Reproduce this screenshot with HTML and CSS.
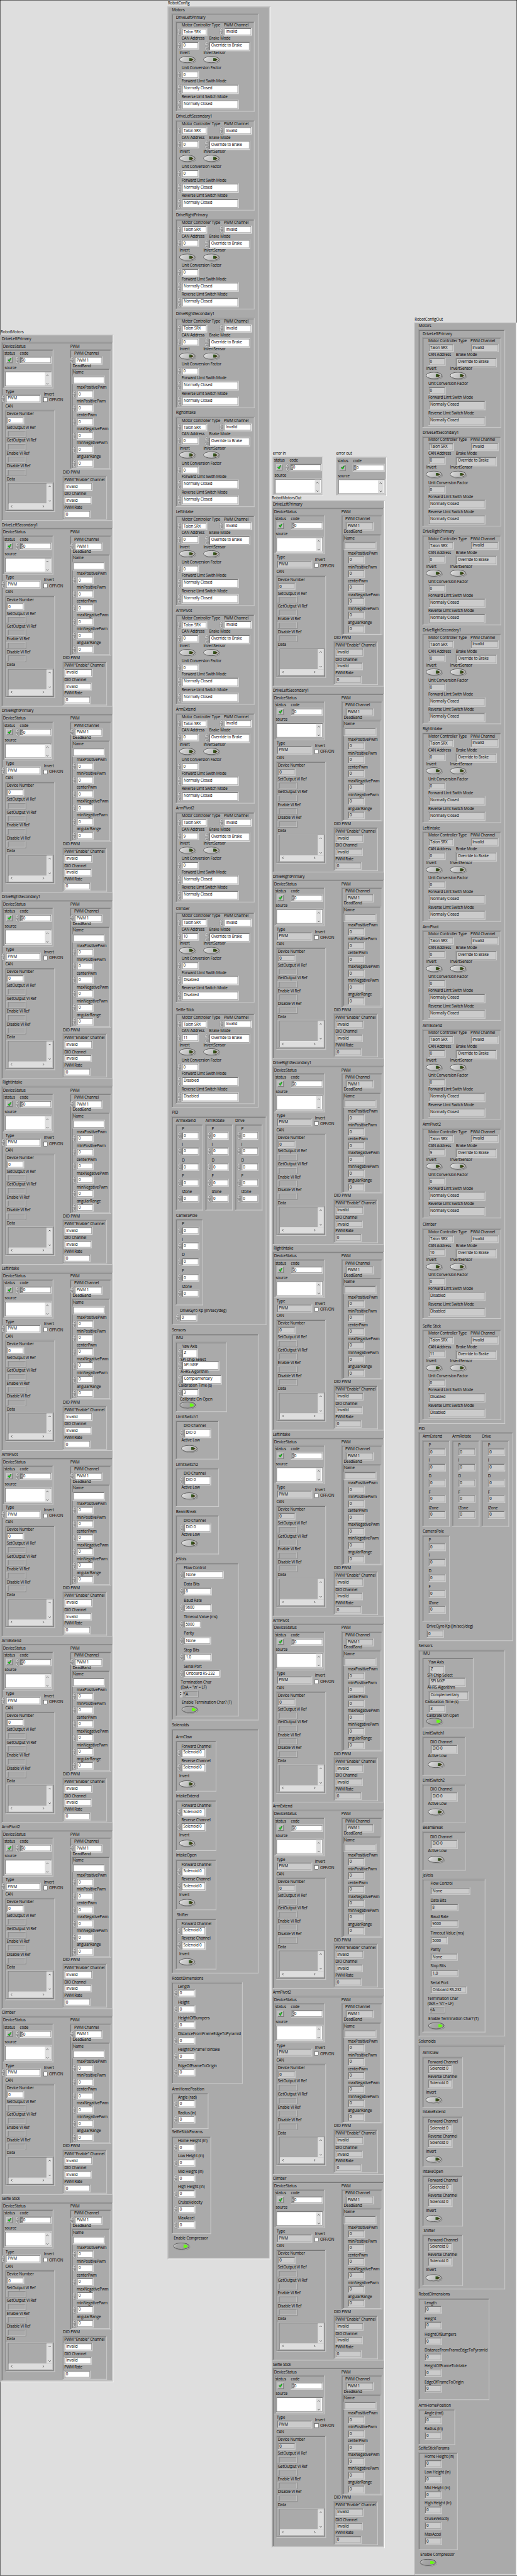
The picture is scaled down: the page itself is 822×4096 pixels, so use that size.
FILE: index.html
```html
<!DOCTYPE html>
<html lang="en">
<head>
<meta charset="utf-8">
<title>Robot Config Front Panel</title>
<link rel="stylesheet" href="styles.css">
</head>
<body>
<svg class="defs" width="0" height="0">
  <defs>
    <linearGradient id="metal" x1="0" y1="0" x2="1" y2="0.35">
      <stop offset="0" stop-color="#f4f4f4"/><stop offset="0.35" stop-color="#cfcfcf"/><stop offset="1" stop-color="#b4b4b4"/>
    </linearGradient>
    <linearGradient id="metalOn" x1="0" y1="0" x2="1" y2="0.35">
      <stop offset="0" stop-color="#e8e8e8"/><stop offset="0.3" stop-color="#a8a8a8"/><stop offset="1" stop-color="#9a9a9a"/>
    </linearGradient>
    <linearGradient id="dome" x1="0" y1="0" x2="1" y2="0">
      <stop offset="0" stop-color="#dcdcdc"/><stop offset="1" stop-color="#a6a6a6"/>
    </linearGradient>
    <linearGradient id="ledOff" x1="0" y1="0" x2="1" y2="0.4">
      <stop offset="0" stop-color="#336b2c"/><stop offset="1" stop-color="#3b2c06"/>
    </linearGradient>
  </defs>
  <symbol id="toggle-off" viewBox="0 0 52 24">
    <ellipse cx="27.5" cy="13.6" rx="24.3" ry="10" fill="#8a8a8a"/>
    <ellipse cx="26" cy="12.3" rx="24.3" ry="10" fill="#b8b8b8"/>
    <ellipse cx="24.8" cy="10.7" rx="23.8" ry="9.7" fill="url(#metal)" stroke="#3c3c3c" stroke-width="1.4"/>
    <path d="M30.5 6.3h6l7 4.6-6 4.4h-7z" fill="url(#ledOff)"/>
  </symbol>
  <symbol id="toggle-on" viewBox="0 0 52 24">
    <ellipse cx="27.5" cy="13.6" rx="24.3" ry="10" fill="#8a8a8a"/>
    <ellipse cx="26" cy="12.3" rx="24.3" ry="10" fill="#b8b8b8"/>
    <ellipse cx="24.8" cy="10.7" rx="23.8" ry="9.7" fill="url(#metalOn)" stroke="#3c3c3c" stroke-width="1.4"/>
    <path d="M31.5 6h6l7.5 5-6 4.6h-7.5z" fill="#66fb12"/>
  </symbol>
  <symbol id="spin-24" viewBox="0 0 12 24">
    <path d="M.7 11.4C.7 5 2.500 .8 6 .8s5.300 4.200 5.300 10.600z" fill="url(#dome)" stroke="#6e6e6e" stroke-dasharray="1.600 .9" stroke-width=".9"/>
    <path d="M.7 12.800C.7 19 2.500 23.200 6 23.200s5.300-4.200 5.300-10.400z" fill="url(#dome)" stroke="#5c5c5c" stroke-dasharray="1.600 .9" stroke-width=".9"/>
    <path d="M4 8.500L6.200 5l2 3.500M4 15.300h4.200L6.200 18.800z" fill="none" stroke="#555" stroke-width="1"/>
  </symbol>
  <symbol id="spin-31" viewBox="0 0 12 31">
    <path d="M.7 12.800C.7 5 2.500 .8 6 .8s5.300 4.200 5.300 12z" fill="url(#dome)" stroke="#6e6e6e" stroke-dasharray="1.600 .9" stroke-width=".9"/>
    <path d="M.7 18C.7 26 2.500 30.200 6 30.200s5.300-4.200 5.300-12.200z" fill="url(#dome)" stroke="#5c5c5c" stroke-dasharray="1.600 .9" stroke-width=".9"/>
    <path d="M4 9L6.200 5.500l2 3.500M4 22h4.200L6.200 25.500z" fill="none" stroke="#555" stroke-width="1"/>
  </symbol>
  <symbol id="check" viewBox="0 0 12 12">
    <path d="M1 6.500l3-.8 1.200 1.500L8.300 1.500l3-.8L6.500 11H4.200z" fill="#12f312" stroke="#0a2a0a" stroke-width=".9"/>
  </symbol>
  <symbol id="chev-up" viewBox="0 0 8 6"><path d="M.8 5L4 1.800 7.200 5" fill="none" stroke="#5a5a5a" stroke-width="1.900"/></symbol>
  <symbol id="chev-down" viewBox="0 0 8 6"><path d="M.8 1L4 4.200 7.200 1" fill="none" stroke="#5a5a5a" stroke-width="1.900"/></symbol>
  <symbol id="chev-left" viewBox="0 0 6 8"><path d="M5 .8L1.800 4 5 7.200" fill="none" stroke="#5a5a5a" stroke-width="1.900"/></symbol>
  <symbol id="chev-right" viewBox="0 0 6 8"><path d="M1 .8L4.200 4 1 7.200" fill="none" stroke="#5a5a5a" stroke-width="1.900"/></symbol>
</svg>
<main class="window"><div class="panel" id="panel"></div></main>
<script src="panel.js"></script>
</body>
</html>
```
FILE: styles.css
```css
* { box-sizing: border-box; }

body {
  margin: 0;
  background: #dedede;
}

.defs { display: block; }

.window {
  width: 822px;
  height: 4096px;
  overflow: hidden;
}

/* The panel is laid out at design size and scaled down to the window. */
.panel {
  display: grid;
  grid-template-columns: 508px 315px 434px 311px;
  width: 1570px;
  height: 7819px;
  border: 1px solid #000;
  background: #dedede;
  transform: scale(0.52357, 0.52385);
  transform-origin: 0 0;
  font: 12px/16px "Open Sans", "Noto Sans", sans-serif;
  letter-spacing: -0.32px;
  color: #000;
  white-space: nowrap;
}

.column { min-width: 0; }
.column-motors { padding-top: 997.6px; }
.column-config { padding-top: 0; }
.column-motors-out { padding-top: 1368px; }
.column-config-out { padding-top: 959.6px; }

.row {
  display: flex;
  align-items: flex-start;
}

.cell {
  flex: none;
  width: 0;
}

.control {
  display: flex;
  flex-direction: column;
  align-items: flex-start;
  width: max-content;
}

.label {
  position: relative;
  z-index: 1;
  height: 16px;
}

.cluster {
  border: 2px solid;
  border-color: #999 #cbcbcb #cbcbcb #999;
  box-shadow: inset 2px 2px 0 #777;
  background: #aaa;
}

.cluster.top {
  border-color: #c9c9c9 #fff #fff #c9c9c9;
  box-shadow: inset -2px -2px 0 #cbcbcb;
}

.input {
  display: flex;
  align-items: center;
}

.spinner {
  flex: none;
  width: 12px;
  margin-left: -12px;
}

.field {
  align-self: flex-start;
  padding: 2px 0 0 5px;
  border: 2px solid;
  border-color: #999 #cbcbcb #cbcbcb #999;
  box-shadow: inset 2px 2px 0 #777, inset -2px -2px 0 #aaa;
  background: #fff;
  line-height: 16px;
}

.field.indicator { background: #cbcbcb; }

.field.numeric { padding-left: 4px; }

.code {
  display: flex;
  padding: 2px 2px 2px 2px;
}

.code .radix {
  width: 7px;
  padding-left: 1px;
  background: #777;
  color: #e8e8e8;
}

.source {
  display: flex;
  justify-content: flex-end;
  width: 145px;
  height: 48px;
  padding: 2px 4px 2px 2px;
}

.scroll {
  display: flex;
  justify-content: space-between;
  background: #dedede;
}

.scroll.vertical {
  flex-direction: column;
  align-items: center;
  width: 16px;
  padding: 6px 0 2px;
}

.scroll.vertical svg { width: 8px; height: 6px; }
.scroll.horizontal svg { width: 6px; height: 8px; }

.status {
  display: flex;
  align-items: center;
  justify-content: center;
  width: 19px;
  height: 19px;
  border: 2px solid;
  border-color: #cbcbcb #777 #777 #cbcbcb;
  background: #bbb;
}

.status svg { width: 12px; height: 12px; }

.toggle {
  display: block;
  width: 52px;
  height: 24px;
}

.check {
  display: flex;
  align-items: center;
  gap: 4px;
}

.check i {
  width: 13px;
  height: 13px;
  border: 1px solid #222;
  background: #fff;
}

.ref {
  border: 1px solid;
  border-color: #cbcbcb #777 #777 #cbcbcb;
  width: 60px;
  height: 21px;
  padding: 1px 1px 1px 5px;
}

.ref .well {
  height: 100%;
  border: 1px solid;
  border-color: #777 #cbcbcb #cbcbcb #777;
}

.ref.data {
  width: 144px;
  height: 86px;
  border-width: 1px 2px 2px 1px;
}

.ref.data .well {
  display: grid;
  grid-template: 1fr 17px / 1fr 17px;
}

.ref.data .view { border: 1px solid; border-color: transparent #fff #fff transparent; }
.ref.data .vertical { width: 17px; padding: 6px 0 5px; }
.ref.data .horizontal { grid-column: 1 / 3; align-items: center; padding: 0 24px 2px 6px; }

.char {
  display: flex;
  align-items: stretch;
}

.char .steps {
  display: flex;
  flex-direction: column;
  align-items: center;
  gap: 3px;
  width: 7px;
  margin: 0 1px 0 -8px;
  padding: 4px 0;
  background: #cbcbcb;
}

.char .steps i {
  border: 2.500px solid transparent;
  border-top: 0;
  border-bottom: 4px solid #000;
}

.char .steps i:last-child {
  border-bottom: 0;
  border-top: 4px solid #000;
}

.char .box {
  display: flex;
  width: 49px;
  height: 21px;
  padding: 1px 1px 1px 1px;
  border: 1px solid;
  border-color: #cbcbcb #777 #777 #cbcbcb;
  line-height: 15px;
}

.char .box b { width: 6px; font-weight: 400; }

.char .box span {
  flex: 1;
  padding-left: 1px;
  border: 1px solid;
  border-color: #777 #cbcbcb #cbcbcb #777;
}
```
FILE: panel.js
```js
const MOTORS = [
  ["DriveLeftPrimary", "0", "Normally Closed"],
  ["DriveLeftSecondary1", "0", "Normally Closed"],
  ["DriveRightPrimary", "0", "Normally Closed"],
  ["DriveRightSecondary1", "0", "Normally Closed"],
  ["RightIntake", "0", "Normally Closed"],
  ["LeftIntake", "0", "Normally Closed"],
  ["ArmPivot", "0", "Normally Closed"],
  ["ArmExtend", "0", "Normally Closed"],
  ["ArmPivot2", "9", "Normally Closed"],
  ["Climber", "10", "Disabled"],
  ["Selfie Stick", "11", "Disabled"],
];

const use = (id, cls, w, h) =>
  `<svg class="${cls}"${w ? ` width="${w}" height="${h}"` : ""}><use href="#${id}"/></svg>`;

const BORDER = 2;

/* Each row is [top, [x, html], ...]; a row reaches down to the next one. */
function rows(list, edge = BORDER) {
  return list.map(([top, ...cells], i) => {
    const next = list[i + 1];
    const lead = i ? 0 : top - edge;
    const height = next ? next[0] - top : 0;
    let at = edge;
    const body = cells.map(([x, html]) => {
      const gap = x - at;
      at = x;
      return `<div class="cell" style="margin-left:${gap.toFixed(1)}px">${html}</div>`;
    }).join("");
    return `<div class="row" style="padding-top:${lead.toFixed(1)}px;height:${(lead + height).toFixed(1)}px">${body}</div>`;
  }).join("");
}

const control = (label, body, gap = 1, lx = 1) =>
  `<div class="control"><span class="label" style="margin:0 0 ${gap}px ${lx}px">${label}</span>${body}</div>`;

const cluster = (w, h, list, cls = "") =>
  `<div class="cluster ${cls}" style="width:${w}px;height:${h}px">${rows(list)}</div>`;

const toggle = on => use(on ? "toggle-on" : "toggle-off", "toggle");

const scroll = dir => `<div class="scroll ${dir}">` +
  (dir === "vertical" ? use("chev-up", "") + use("chev-down", "") : use("chev-left", "") + use("chev-right", "")) + `</div>`;

function field(out, w, h, value = "", spin = 24) {
  const numeric = /^\d+$/.test(value) ? " numeric" : "";
  const spinner = !out && spin ? use("spin-" + spin, "spinner", 12, spin) : "";
  return `<div class="input" style="height:${h}px">${spinner}<div class="field${numeric}${out ? " indicator" : ""}" style="width:${w}px;height:${h}px">${value}</div></div>`;
}

function status(spin) {
  return [
    [4, [4, control("status", `<div class="status">${use("check", "")}</div>`, 2.5, 1).replace('class="status"', 'class="status" style="margin-left:7px"')],
        [51, control("code", `<div class="input">${spin ? use("spin-24", "spinner", 12, 24) : ""}<div class="field code" style="width:98px;height:23px"><span class="radix">d</span>0</div></div>`)]],
    [48.5, [5, control("source", `<div class="field source">${scroll("vertical")}</div>`)]],
  ];
}

function device(out) {
  const f = (w, h, v, s) => field(out, w, h, v, s);
  const ref = '<div class="ref"><div class="well"></div></div>';
  const can = cluster(152, 310, [
    [4, [4.3, control("Device Number", f(54, 22.5, "0", 0))]],
    [45.8, [4.3, control("SetOutput VI Ref", ref)]],
    [85, [4.3, control("GetOutput VI Ref", ref)]],
    [124, [4.3, control("Enable VI Ref", ref)]],
    [163, [4.3, control("Disable VI Ref", ref)]],
    [202, [4.3, control("Data", `<div class="ref data"><div class="well"><div class="view"></div>${scroll("vertical")}${scroll("horizontal")}</div></div>`, 2.500)]],
  ]);
  const limits = ["maxPositivePwm", "minPositivePwm", "centerPwm", "maxNegativePwm", "minNegativePwm", "angularRange"];
  const deadBand = cluster(117, 305.5, [
    [4, [3, control("Name", f(99, 25.5, "", 0), 3)]],
    ...limits.map((name, i) => [50.5 + i * 42, [15, control(name, f(52, 24.5, "0"), 0, 0.5)]]),
  ]);
  const pwm = cluster(125.7, 365, [
    [4, [13, control("PWM Channel", f(86, 25.7, "PWM 1"), 0.6, 0)]],
    [41.400, [5, control("DeadBand", deadBand, 0, 3)]],
  ]);
  const dio = cluster(135, 133, [
    [4, [4, control('PWM "Enable" Channel', f(87, 25.5, "Invalid", 0))]],
    [47.400, [4, control("DIO Channel", f(85, 23.7, "Invalid", 0), 0)]],
    [88, [4, control("PWM Rate", f(81, 24, "0", 0))]],
  ]);
  const invert = '<div class="check"><i></i>OFF/ON</div>';
  return cluster(338.5, 543, [
    [5, [4.5, control("DeviceStatus", cluster(154, 118.6, status(!out)), 1.6)], [208.6, control("PWM", pwm, 1.6)]],
    [143, [12.5, control("Type", f(108, 25.7, "PWM"), 0)]],
    [150, [128.3, control("Invert", invert, 2)]],
    [187, [11.3, control("CAN", can, 3)]],
    [386.700, [186.3, control("DIO PWM", dio, 3)]],
  ]);
}

function robotMotors(out) {
  return cluster(344, 6215, MOTORS.map(([name], i) =>
    [4 + i * 564.6, [2.5, control(name, device(out), 1.8, name === "RightIntake" ? 4 : 1.3)]]), "top");
}

function motorConfig(out, can, limit) {
  const f = (w, h, v, s) => field(out, w, h, v, s);
  return cluster(240, 274, [
    [3, [17.3, control("Motor Controller Type", f(78, 24, "Talon SRX"))], [145.500, control("PWM Channel", f(86, 25.5, "Invalid"), 0)]],
    [44.5, [17.3, control("CAN Address", f(53, 24, can))], [101, control("Brake Mode", f(125.5, 29, "Override to Brake", 31))]],
    [87, [11, control("Invert", toggle(false), 2)], [83.500, control("InvertSensor", toggle(false), 2)]],
    [133, [17.3, control("Unit Conversion Factor", f(53, 24, "0"))]],
    [174.6, [17.3, control("Forward Limt Swith Mode", f(174, 29, limit, 31))]],
    [222, [17.3, control("Reverse Limt Switch Mode", f(174, 29, limit, 31))]],
  ]);
}

function robotConfig(out) {
  const f = (w, h, v, s) => field(out, w, h, v, s);
  const extra = { Climber: 4, "Selfie Stick": 12 };
  const motors = cluster(263.5, 3321.6, MOTORS.map(([name, can, limit], i) =>
    [4.5 + i * 300 + (name === "Climber" ? 4.5 : name === "Selfie Stick" ? 12 : 0),
      [12, control(name, motorConfig(out, can, limit), 3.5, 1)]]));

  const gains = () => cluster(83.400, 262, ["P", "I", "D", "F", "IZone"].map((name, i) =>
    [[6.7, 53.5, 101, 149, 197][i], [18.3, control(name, f(53, 24.5, "0"), 0.5, 1)]]));
  const pid = cluster(287.7, 634, [
    [5, [12, control("ArmExtend", gains(), 3.5)], [102, control("ArmRotate", gains(), 3.5)], [192, control("Drive", gains(), 3.5)]],
    [293, [12, control("CameraPole", gains(), 3.8)]],
    [582, [24.3, control("DriveGyro Kp ((in/sec)/deg)", f(53, 23.5, "0"), 2)]],
  ]);

  const imu = cluster(155.7, 213.5, [
    [5, [18.5, control("Yaw Axis", f(49, 28.5, "Z", 31), 0.5)]],
    [45.600, [18.5, control("SPI Chip Select", f(114, 29, "SPI MXP", 31), -3, -3.5)]],
    [82.300, [18.5, control("AHRS Algorithm", f(122, 29, "Complementary", 31), 2.5, -3)]],
    [124.400, [18.5, control("Calibration Time (s)", f(52.500, 24.5, "3"), 2, -10)]],
    [166.5, [12, control("Calibrate On Open", toggle(true), -1)]],
  ]);
  const dio = () => cluster(131.6, 118.6, [
    [8, [24.3, control("DIO Channel", f(83, 29, "DIO 0"), 0, 0)]],
    [51, [16.500, control("Active Low", toggle(false), 7)]],
  ]);
  const serial = [["Flow Control", 121, "None"], ["Data Bits", 85, "8"], ["Baud Rate", 85, "9600"],
    ["Timeout Value (ms)", 53, "5000"], ["Parity", 83, "None"], ["Stop Bits", 85, "1.0"], ["Serial Port", 111, "Onboard RS-232"]];
  const steps = out ? "" : '<div class="steps"><i></i><i></i></div>';
  const jevois = cluster(191.5, 466, [
    ...serial.map(([name, w, v], i) => [6.500 + i * 50, [24.5, control(name, f(w, 23.5, v), 2, 0.5)]]),
    [355, [16, control("Termination Char", "", 0, 0)]],
    [369.5, [20.5, control("(0xA = '\\n' = LF)", `<div class="char">${steps}<div class="box"><b>×</b><span>A</span></div></div>`, 1.500, -4.5)]],
    [416.7, [17.5, control("Enable Termination Char? (T)", toggle(true), 2)]],
  ]);
  const sensors = cluster(263.5, 1173, [
    [2.7, [12, control("IMU", imu, 5)]],
    [243.8, [12, control("LimitSwitch1", dio(), 3)]],
    [387.7, [12, control("LimitSwitch2", dio(), 3)]],
    [531.5, [12, control("BeamBreak", dio(), 3)]],
    [675.4, [12, control("JeVois", jevois, 3.5)]],
  ]);

  const solenoid = () => cluster(123.5, 154.6, [
    [8, [16.5, control("Forward Channel", f(75, 27.5, "Solenoid 0"), -0.5)]],
    [52.5, [16.5, control("Reverse Channel", f(75, 27.5, "Solenoid 0"), -0.5)]],
    [99, [9.5, control("Invert", toggle(false), 5, 1.5)]],
  ]);
  const solenoids = cluster(263.5, 742, ["ArmClaw", "IntakeExtend", "IntakeOpen", "Shifter"].map((name, i) =>
    [16.3 + i * 180, [12, control(name, solenoid(), 3.7, name === "Shifter" ? 4 : 1)]]));

  const numbers = (names, top, step) => names.map((name, i) =>
    [top + i * step, [18.5, control(name, f(53, 24, "0"), 0.5, 0.5)]]);

  return cluster(311.5, 6838, [
    [1.6, [12.3, control("Motors", motors, 3)]],
    [3349, [12.3, control("PID", pid, 3)]],
    [4009.400, [12.3, control("Sensors", sensors, 4)]],
    [5208.600, [12.3, control("Solenoids", solenoids, 3.5)]],
    [5977.200, [12.3, control("RobotDimensions", cluster(215.7, 309, numbers(
      ["Length", "Height", "HeightOfBumpers", "DistanceFromFrameEdgeToPyramid", "HeightOfFrameToIntake", "EdgeOfFrameToOrigin"], 5.8, 48)), 3.5)]],
    [6313.900, [12.3, control("ArmHomePosition", cluster(111.5, 109, numbers(["Angle (rad)", "Radius (in)"], 5, 47)), 3.5)]],
    [6445, [12.3, control("SelfieStickParams", cluster(119.5, 296.400, numbers(
      ["Home Height (in)", "Low Height (in)", "Mid Height (in)", "High Height (in)", "CruiseVelocity", "MaxAccel"], 5, 47)), 4)]],
    [6767, [16.5, control("Enable Compressor", toggle(true), 5, 2)]],
  ], "top");
}

const column = (cls, list) => `<section class="column ${cls}">${rows(list, 0)}</section>`;

document.getElementById("panel").innerHTML =
  column("column-motors", [[0, [0.3, control("RobotMotors", robotMotors(false), 1.5, 0.5)]]]) +
  column("column-config", [[0, [0, control("RobotConfig", robotConfig(false), 2.5)]]]) +
  column("column-motors-out", [
    [0, [3.5, control("error in", cluster(154.5, 119, status(true), "top"))], [196, control("error out", cluster(154.5, 119, status(false), "top"), 2)]],
    [133.5, [0.5, control("RobotMotorsOut", robotMotors(true), 0.5)]],
  ]) +
  column("column-config-out", [[0, [0, control("RobotConfigOut", robotConfig(true), 2.5)]]]);
```
